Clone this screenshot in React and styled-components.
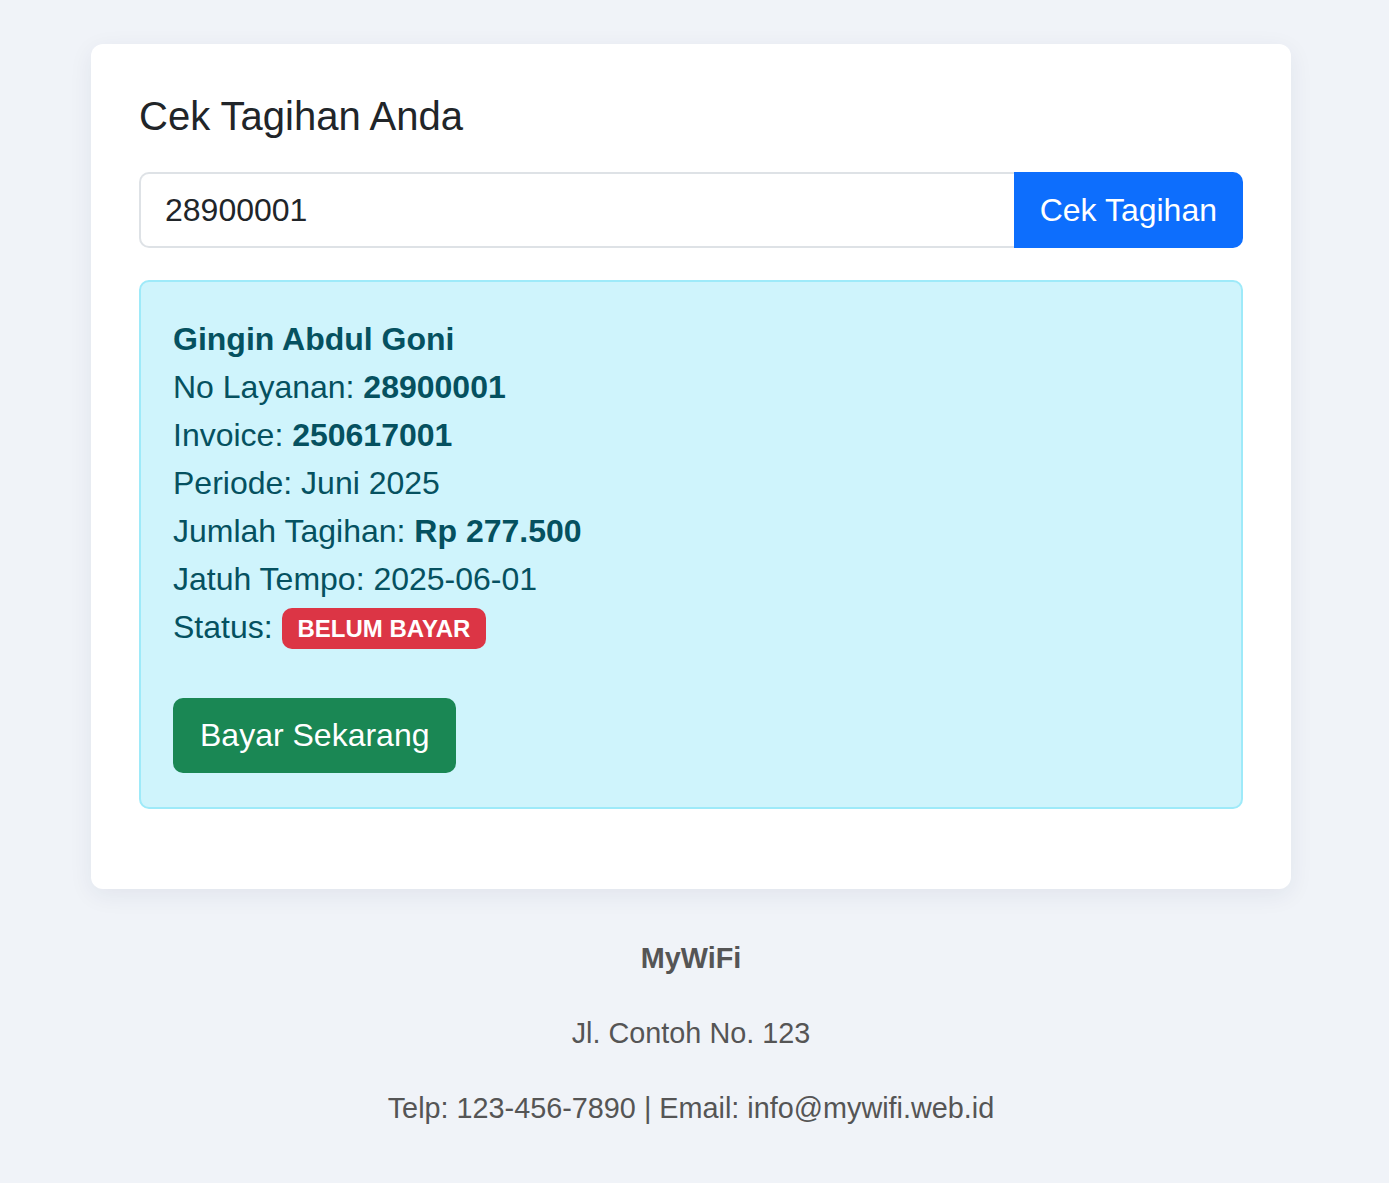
import React, { useState } from 'react'
import { styled, createGlobalStyle } from 'styled-components'

const GlobalStyle = createGlobalStyle`
  html, body {
    margin: 0;
    padding: 0;
    background: #f0f3f8;
  }
  body {
    font-family: "Liberation Sans", Arial, Helvetica, sans-serif;
    color: #212529;
    -webkit-font-smoothing: antialiased;
  }
  * { box-sizing: border-box; }
`

const Page = styled.div`
  min-height: 1183px;
  padding: 44px 7px 40px 0;
  display: flex;
  flex-direction: column;
  align-items: center;
`

const Card = styled.section`
  width: 1200px;
  background: #fff;
  border-radius: 12px;
  box-shadow: 0 6px 24px rgba(30, 45, 80, 0.07);
  padding: 48px 48px 48px;
`

const Title = styled.h4`
  margin: 0 0 32px;
  font-size: 40px;
  font-weight: 400;
  line-height: 1.2;
  color: #212529;
`

const InputGroup = styled.form`
  display: flex;
  height: 76px;
  margin-bottom: 32px;
`

const Input = styled.input`
  flex: 1;
  min-width: 0;
  border: 2px solid #dee2e6;
  border-right: none;
  border-radius: 10px 0 0 10px;
  padding: 0 24px;
  font-family: inherit;
  font-size: 32px;
  color: #212529;
  outline: none;
`

const Button = styled.button`
  border: none;
  background: ${(p) => p.$bg};
  color: #fff;
  font-family: inherit;
  font-size: 32px;
  padding: 0 26px;
  border-radius: ${(p) => p.$radius || '10px'};
  cursor: pointer;
`

const Alert = styled.div`
  background: #cff4fc;
  border: 2px solid #9eeaf9;
  border-radius: 10px;
  color: #055160;
  padding: 33px 32px 34px;
  margin-bottom: 32px;
  font-size: 32px;
  line-height: 48px;
`

const Line = styled.div`
  font-weight: ${(p) => (p.$bold ? 700 : 400)};
`

const Badge = styled.span`
  display: inline-block;
  background: #dc3545;
  color: #fff;
  font-size: 24px;
  font-weight: 700;
  line-height: 1;
  padding: 9px 16px 8px;
  border-radius: 10px;
  vertical-align: 1px;
`

const PayRow = styled.div`
  margin-top: 47px;
  display: flex;
`

const PayButton = styled(Button)`
  height: 75px;
  padding: 0 27px;
`

const Footer = styled.footer`
  margin-top: 48px;
  text-align: center;
  color: #555;
  font-size: 28.8px;
  line-height: 42px;
  display: flex;
  flex-direction: column;
  gap: 33px;
`

const FooterLine = styled.p`
  margin: 0;
  font-weight: ${(p) => (p.$bold ? 700 : 400)};
`

const App = () => {
  const [no, setNo] = useState('28900001')

  return (
    <>
      <GlobalStyle />
      <Page>
        <Card>
          <Title>Cek Tagihan Anda</Title>
          <InputGroup onSubmit={(e) => e.preventDefault()}>
            <Input value={no} onChange={(e) => setNo(e.target.value)} />
            <Button type="submit" $bg="#0d6efd" $radius="0 10px 10px 0">
              Cek Tagihan
            </Button>
          </InputGroup>
          <Alert>
            <Line $bold>Gingin Abdul Goni</Line>
            <Line>No Layanan: <b>28900001</b></Line>
            <Line>Invoice: <b>250617001</b></Line>
            <Line>Periode: Juni 2025</Line>
            <Line>Jumlah Tagihan: <b>Rp 277.500</b></Line>
            <Line>Jatuh Tempo: 2025-06-01</Line>
            <Line>Status: <Badge>BELUM BAYAR</Badge></Line>
            <PayRow>
              <PayButton $bg="#1a8754">Bayar Sekarang</PayButton>
            </PayRow>
          </Alert>
        </Card>
        <Footer>
          <FooterLine $bold>MyWiFi</FooterLine>
          <FooterLine>Jl. Contoh No. 123</FooterLine>
          <FooterLine>Telp: 123-456-7890 | Email: info@mywifi.web.id</FooterLine>
        </Footer>
      </Page>
    </>
  )
}

export default App
